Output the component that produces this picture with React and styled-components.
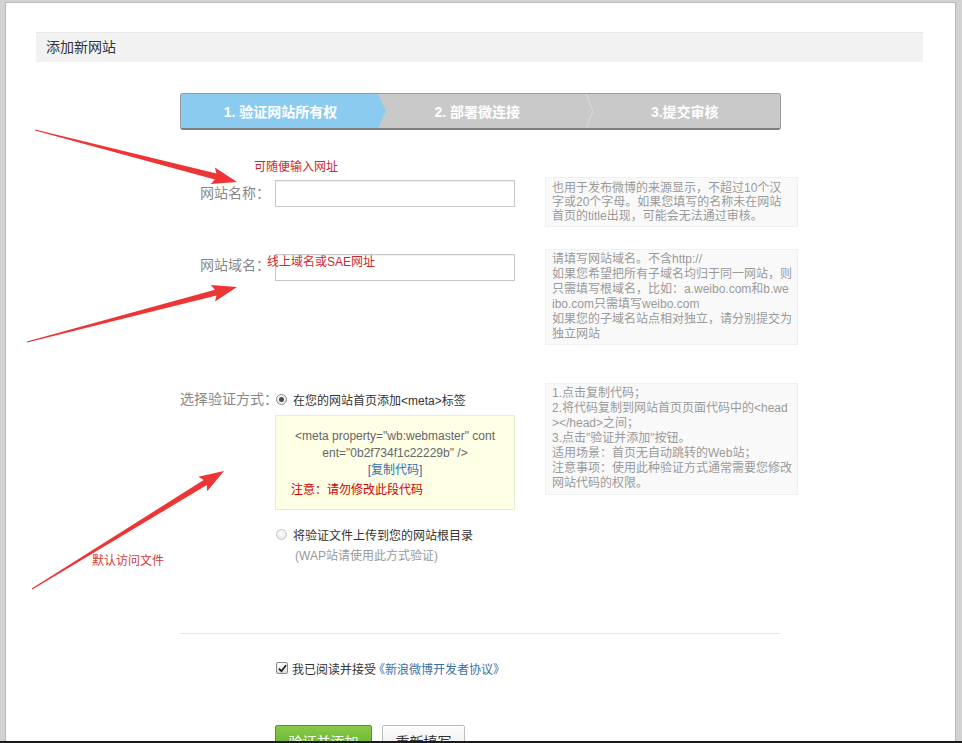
import React from 'react';
import styled, { createGlobalStyle, css } from 'styled-components';

const GlobalStyle = createGlobalStyle`
  html, body { margin: 0; padding: 0; }
  body {
    font-family: "Liberation Sans", "Noto Sans CJK SC", sans-serif;
    font-size: 12px;
    color: #333;
  }
`;

const Page = styled.div`
  position: relative;
  width: 962px;
  height: 743px;
  background: #d2d2d2;
  display: flex;
  flex-direction: column;
  overflow: hidden;
`;

const Frame = styled.div`
  flex: 1;
  min-height: 0;
  margin: 2px 6px 0 5px;
  background: #fff;
  border: 1px solid #b8b8b8;
  border-bottom: none;
  padding: 29px 32px 0 30px;
  overflow: hidden;
`;

const BottomBar = styled.div`
  height: 2px;
  background: #1a1a1a;
`;

const Header = styled.h2`
  margin: 0;
  height: 30px;
  box-sizing: border-box;
  background: #f2f2f2;
  border-top: 1px solid #e6e6e6;
  padding-left: 10px;
  font-size: 14px;
  font-weight: normal;
  line-height: 29px;
  color: #333;
`;

const Steps = styled.div`
  margin: 31px 0 0 144px;
  width: 601px;
  height: 37px;
  box-sizing: border-box;
  display: flex;
  background: #c9c9c9;
  border: 1px solid #9c9c9c;
  border-bottom: 2px solid #7f7f7f;
  border-radius: 3px;
  overflow: hidden;
`;

const Step = styled.div`
  display: flex;
  align-items: center;
  justify-content: center;
  color: #fff;
  font-size: 14px;
  font-weight: bold;
  white-space: nowrap;
  box-sizing: border-box;
  padding-right: ${(p) => p.$pr || 0}px;
  ${(p) =>
    p.$active
      ? css`
          width: 205px;
          flex: none;
          background: #8ccbf0;
          clip-path: polygon(0 0, calc(100% - 8px) 0, 100% 50%, calc(100% - 8px) 100%, 0 100%);
        `
      : css`
          flex: 1;
        `}
`;

const Chevron = styled.svg`
  flex: none;
  width: 9px;
  height: 34px;
`;

const Form = styled.div`
  margin-left: 144px;
  width: 618px;
`;

const Row = styled.div`
  display: grid;
  grid-template-columns: 95px 240px 283px;
  align-items: start;
  margin-top: ${(p) => p.$mt}px;
`;

const Label = styled.div`
  text-align: right;
  white-space: nowrap;
  font-size: 14px;
  color: #888;
  line-height: ${(p) => p.$lh}px;
  margin-top: ${(p) => p.$mt}px;
  padding-right: ${(p) => p.$pr || 0}px;
`;

const TextInput = styled.input`
  display: block;
  width: 240px;
  height: 27px;
  box-sizing: border-box;
  margin: ${(p) => p.$mt}px 0 0;
  padding: 0 5px;
  border: 1px solid #c8c8c8;
  box-shadow: inset 0 1px 1px #f0f0f0;
  background: #fff;
  font-size: 12px;
  outline: none;
`;

const Hint = styled.div`
  margin-left: 30px;
  width: 253px;
  box-sizing: border-box;
  padding: ${(p) => p.$pad};
  background: #f9f9f9;
  border: 1px solid #f0f0f0;
  font-size: 12px;
  line-height: ${(p) => p.$lh}px;
  color: #999;
  white-space: nowrap;
`;

const Line = styled.span`
  display: block;
`;

const Field = styled.div`
  display: flex;
  flex-direction: column;
`;

const RadioRow = styled.label`
  display: flex;
  align-items: center;
  height: 16px;
  margin-top: ${(p) => p.$mt}px;
  padding-left: 1px;
  gap: 6px;
  font-size: 12px;
  color: #333;
  white-space: nowrap;
`;

const Radio = styled.span`
  flex: none;
  width: 11px;
  height: 11px;
  box-sizing: border-box;
  border-radius: 50%;
  border: 1px solid ${(p) => (p.$checked ? '#8a8a8a' : '#c4c4c4')};
  background: radial-gradient(circle at 50% 40%, #ffffff, #e2e2e2);
  display: inline-flex;
  align-items: center;
  justify-content: center;
  &::after {
    content: '';
    width: 5px;
    height: 5px;
    border-radius: 50%;
    background: #4a4a4a;
    display: ${(p) => (p.$checked ? 'block' : 'none')};
  }
`;

const CodeBox = styled.div`
  margin-top: 8px;
  width: 240px;
  height: 95px;
  box-sizing: border-box;
  background: #ffffe6;
  border: 1px solid #ecebd6;
  padding: 12px 15px 0;
  font-size: 12px;
  line-height: 17px;
  color: #666;
  text-align: center;
  white-space: nowrap;
`;

const CopyLink = styled.a`
  color: #2d6eb3;
  text-decoration: none;
`;

const Warning = styled.div`
  margin-top: 3px;
  text-align: left;
  color: #cc0000;
`;

const SubNote = styled.div`
  margin-top: 6px;
  padding-left: 20px;
  line-height: 16px;
  color: #999;
  font-size: 12px;
  white-space: nowrap;
`;

const Separator = styled.hr`
  margin: 69px 0 0;
  width: 600px;
  border: none;
  border-top: 1px solid #e6e6e6;
  height: 0;
`;

const AgreeRow = styled.label`
  display: flex;
  align-items: center;
  gap: 4px;
  height: 16px;
  margin-top: 26px;
  padding-left: 96px;
  font-size: 12px;
  color: #333;
  white-space: nowrap;
`;

const CheckBox = styled.span`
  flex: none;
  width: 12px;
  height: 12px;
  box-sizing: border-box;
  border: 1px solid #8a8a8a;
  border-radius: 2px;
  background: linear-gradient(#fdfdfd, #dedede);
  display: inline-flex;
  align-items: center;
  justify-content: center;
`;

const AgreeLink = styled.a`
  color: #3a6ea5;
  text-decoration: none;
  margin-left: -7px;
`;

const Buttons = styled.div`
  display: flex;
  gap: 10px;
  margin-top: 49px;
  padding-left: 95px;
`;

const Button = styled.button`
  height: 32px;
  box-sizing: border-box;
  width: ${(p) => p.$w}px;
  border-radius: 2px;
  font-family: inherit;
  font-size: 14px;
  padding: 0;
  ${(p) =>
    p.$primary
      ? css`
          color: #fff;
          background: linear-gradient(#86c94a, #5fae22);
          border: 1px solid #4f9a1c;
        `
      : css`
          color: #333;
          background: linear-gradient(#fdfdfd, #eaeaea);
          border: 1px solid #bdbdbd;
        `}
`;

const Overlay = styled.svg`
  position: absolute;
  left: 0;
  top: 0;
  width: 962px;
  height: 743px;
  pointer-events: none;
`;

const Note = styled.span`
  position: absolute;
  left: ${(p) => p.$x}px;
  top: ${(p) => p.$y}px;
  font-size: 12px;
  line-height: 16px;
  color: ${(p) => p.$color || '#cc2a2a'};
  white-space: nowrap;
  pointer-events: none;
`;

function arrowPoints(tx, ty, px, py, headLen = 22, headW = 17, shaftW = 6) {
  const dx = px - tx;
  const dy = py - ty;
  const L = Math.hypot(dx, dy);
  const ux = dx / L;
  const uy = dy / L;
  const nx = -uy;
  const ny = ux;
  const bx = px - ux * headLen;
  const by = py - uy * headLen;
  const cx = bx - ux * 3;
  const cy = by - uy * 3;
  const pts = [
    [tx + nx * 0.6, ty + ny * 0.6],
    [bx + (nx * shaftW) / 2, by + (ny * shaftW) / 2],
    [cx + (nx * headW) / 2, cy + (ny * headW) / 2],
    [px, py],
    [cx - (nx * headW) / 2, cy - (ny * headW) / 2],
    [bx - (nx * shaftW) / 2, by - (ny * shaftW) / 2],
    [tx - nx * 0.6, ty - ny * 0.6],
  ];
  return pts.map(([x, y]) => `${x.toFixed(1)},${y.toFixed(1)}`).join(' ');
}

const arrows = [
  [35, 130, 237, 182],
  [27, 342, 237, 287],
  [32, 589, 224, 471],
];

export default function App() {
  return (
    <Page>
      <GlobalStyle />
      <Frame>
        <Header>添加新网站</Header>

        <Steps>
          <Step $active $pr={6}>1. 验证网站所有权</Step>
          <Step $pr={16}>2. 部署微连接</Step>
          <Chevron viewBox="0 0 9 34">
            <polyline points="1,0 8,17 1,34" fill="none" stroke="#dadada" strokeWidth="1" />
          </Chevron>
          <Step $pr={4}>3.提交审核</Step>
        </Steps>

        <Form>
          <Row $mt={47}>
            <Label $lh={27} $mt={3} $pr={5}>网站名称：</Label>
            <TextInput $mt={3} />
            <Hint $lh={14} $pad="3px 6px">
              <Line>也用于发布微博的来源显示，不超过10个汉</Line>
              <Line>字或20个字母。如果您填写的名称未在网站</Line>
              <Line>首页的title出现，可能会无法通过审核。</Line>
            </Hint>
          </Row>

          <Row $mt={22}>
            <Label $lh={27} $mt={3} $pr={5}>网站域名：</Label>
            <TextInput $mt={5} />
            <Hint $lh={15} $pad="2px 6px">
              <Line>请填写网站域名。不含http://</Line>
              <Line>如果您希望把所有子域名均归于同一网站，则</Line>
              <Line>只需填写根域名，比如：a.weibo.com和b.we</Line>
              <Line>ibo.com只需填写weibo.com</Line>
              <Line>如果您的子域名站点相对独立，请分别提交为</Line>
              <Line>独立网站</Line>
            </Hint>
          </Row>

          <Row $mt={38}>
            <Label $lh={16} $mt={8}>选择验证方式：</Label>
            <Field>
              <RadioRow $mt={8}>
                <Radio $checked />
                在您的网站首页添加&lt;meta&gt;标签
              </RadioRow>
              <CodeBox>
                &lt;meta property="wb:webmaster" cont
                <br />
                ent="0b2f734f1c22229b" /&gt;
                <br />
                <CopyLink href="#">[复制代码]</CopyLink>
                <Warning>注意：请勿修改此段代码</Warning>
              </CodeBox>
              <RadioRow $mt={16}>
                <Radio />
                将验证文件上传到您的网站根目录
              </RadioRow>
              <SubNote>(WAP站请使用此方式验证)</SubNote>
            </Field>
            <Hint $lh={15} $pad="2px 6px 3px">
              <Line>1.点击复制代码；</Line>
              <Line>2.将代码复制到网站首页页面代码中的&lt;head</Line>
              <Line>&gt;&lt;/head&gt;之间；</Line>
              <Line>3.点击"验证并添加"按钮。</Line>
              <Line>适用场景：首页无自动跳转的Web站；</Line>
              <Line>注意事项：使用此种验证方式通常需要您修改</Line>
              <Line>网站代码的权限。</Line>
            </Hint>
          </Row>

          <Separator />

          <AgreeRow>
            <CheckBox>
              <svg width="9" height="9" viewBox="0 0 9 9">
                <path d="M1 4.6 L3.4 7.2 L8 1.2" fill="none" stroke="#222" strokeWidth="1.8" />
              </svg>
            </CheckBox>
            我已阅读并接受<AgreeLink href="#">《新浪微博开发者协议》</AgreeLink>
          </AgreeRow>

          <Buttons>
            <Button $primary $w={97}>验证并添加</Button>
            <Button $w={83}>重新填写</Button>
          </Buttons>
        </Form>
      </Frame>
      <BottomBar />

      <Overlay viewBox="0 0 962 743">
        {arrows.map(([tx, ty, px, py], i) => (
          <polygon key={i} points={arrowPoints(tx, ty, px, py)} fill="#ee3535" />
        ))}
      </Overlay>
      <Note $x={254} $y={159}>可随便输入网址</Note>
      <Note $x={267} $y={254}>线上域名或SAE网址</Note>
      <Note $x={92} $y={553} $color="#d23a3a">默认访问文件</Note>
    </Page>
  );
}
